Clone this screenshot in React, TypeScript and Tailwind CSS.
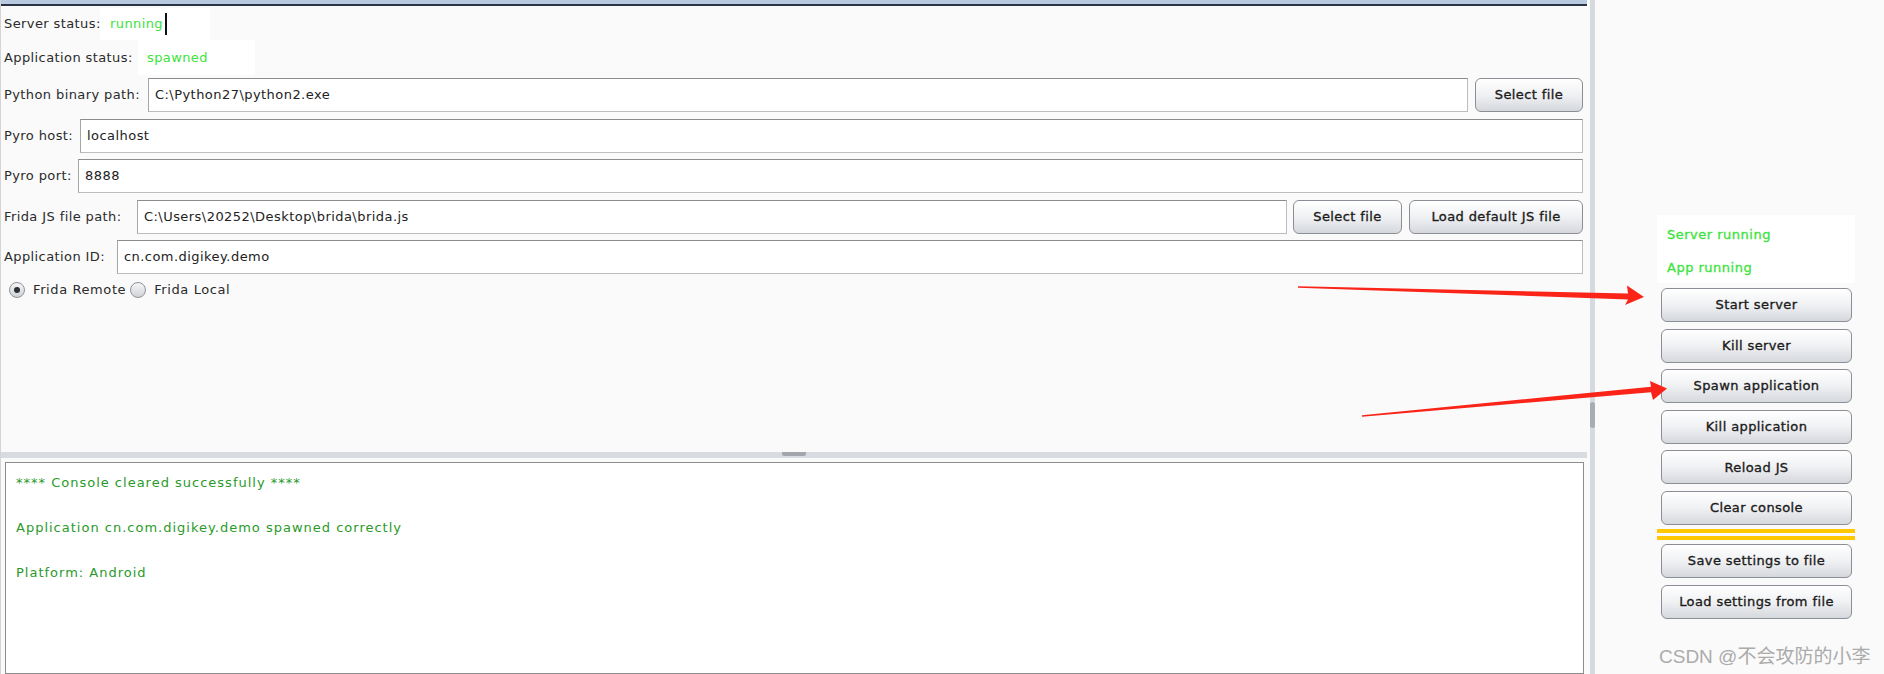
import type { ReactNode } from "react";

const FONT = "font-['DejaVu_Sans',sans-serif]";

function JButton({ children, className = "" }: { children: ReactNode; className?: string }) {
  return (
    <button
      type="button"
      className={`flex h-[34px] shrink-0 items-center justify-center whitespace-nowrap rounded-[6px] border border-[#8b8e94] bg-linear-to-b from-white via-[#f0f1f3] to-[#d5d8dd] text-[13px] tracking-[0.4px] text-[#1c1c1c] shadow-[inset_0_1px_0_#ffffff] [-webkit-text-stroke:0.35px_#1c1c1c] ${className}`}
    >
      {children}
    </button>
  );
}

function TextBox({ value, className = "" }: { value: string; className?: string }) {
  return (
    <div
      className={`flex h-[34px] min-w-0 flex-1 items-center whitespace-nowrap border border-[#bdbdbd] border-t-[#8c8c8c] border-l-[#a6a6a6] bg-white pl-[6px] text-[13px] tracking-[0.45px] text-[#222] ${className}`}
    >
      {value}
    </div>
  );
}

function Radio({ checked, label }: { checked?: boolean; label: string }) {
  return (
    <div className="flex items-center gap-[8px]">
      <span className="flex h-[16px] w-[16px] items-center justify-center rounded-full border border-[#8e9298] bg-linear-to-b from-[#f6f7f8] to-[#cfd2d7]">
        {checked && <span className="h-[6px] w-[6px] rounded-full bg-[#2d3035]" />}
      </span>
      <span className="whitespace-nowrap text-[13px] tracking-[0.6px] text-[#2b2b2b]">{label}</span>
    </div>
  );
}

export default function App() {
  const sideButtons = ["Start server", "Kill server", "Spawn application", "Kill application", "Reload JS", "Clear console"];

  return (
    <div className={`relative flex h-[674px] w-[1884px] overflow-hidden bg-[#fafafa] ${FONT}`}>
      {/* left: settings + console */}
      <div className="flex w-[1590px] shrink-0 flex-col border-l border-[#d4d4d4]">
        <div className="mr-[3px] h-[4px] bg-[#b7cadf]" />
        <div className="mr-[3px] h-[2px] bg-[#2c3343]" />

        <div className="flex h-[446px] flex-col whitespace-nowrap pl-[3px] pr-[7px] pt-[2px] text-[13px] tracking-[0.4px] text-[#2b2b2b]">
          <div className="flex h-[32px] items-center">
            <span className="w-[96px] shrink-0">Server status:</span>
            <div className="flex h-[32px] w-[110px] shrink-0 items-center bg-white pl-[10px] text-[#3be33b]">
              running
              <span className="ml-[2px] h-[22px] w-[2px] bg-[#111]" />
            </div>
          </div>
          <div className="flex h-[35px] items-center">
            <span className="w-[134px] shrink-0">Application status:</span>
            <div className="flex h-[35px] w-[117px] shrink-0 items-center bg-white pl-[9px] text-[#3be33b]">spawned</div>
          </div>

          <div className="mt-[3px] flex flex-col gap-[6.5px]">
            <div className="flex items-center">
              <span className="w-[144px] shrink-0">Python binary path:</span>
              <TextBox value="C:\Python27\python2.exe" />
              <JButton className="ml-[7px] w-[108px]">Select file</JButton>
            </div>
            <div className="flex items-center">
              <span className="w-[76px] shrink-0">Pyro host:</span>
              <TextBox value="localhost" />
            </div>
            <div className="flex items-center">
              <span className="w-[74px] shrink-0">Pyro port:</span>
              <TextBox value="8888" className="pl-[3px]" />
            </div>
            <div className="flex items-center">
              <span className="w-[133px] shrink-0">Frida JS file path:</span>
              <TextBox value="C:\Users\20252\Desktop\brida\brida.js" />
              <JButton className="ml-[6px] w-[109px]">Select file</JButton>
              <JButton className="ml-[7px] w-[174px]">Load default JS file</JButton>
            </div>
            <div className="flex items-center">
              <span className="w-[113px] shrink-0">Application ID:</span>
              <TextBox value="cn.com.digikey.demo" />
            </div>
          </div>

          <div className="ml-[5px] mt-[6px] flex items-center gap-[4px]">
            <Radio checked label="Frida Remote" />
            <Radio label="Frida Local" />
          </div>
        </div>

        {/* split pane divider */}
        <div className="mr-[3px] flex h-[6px] justify-center bg-[#d8dbe0]">
          <span className="h-[4px] w-[24px] rounded-b-[2px] bg-[#a3a7ad]" />
        </div>

        <div className="ml-[4px] mr-[6px] mt-[4px] flex-1 whitespace-nowrap border border-[#8d8d8d] bg-white pl-[10px] text-[13px] leading-[45px] tracking-[1px] text-[#2a9a2a]">
          <div className="mt-[-3px]">
            <div>**** Console cleared successfully ****</div>
            <div>Application cn.com.digikey.demo spawned correctly</div>
            <div>Platform: Android</div>
          </div>
        </div>
      </div>

      {/* scroll strip */}
      <div className="flex w-[5px] shrink-0 flex-col items-center bg-[#d6d9de] pt-[402px]">
        <span className="h-[26px] w-[5px] rounded-full bg-[#a9adb3]" />
      </div>

      {/* right: controls */}
      <div className="flex flex-1 flex-col pl-[62px] pt-[215px]">
        <div className="flex w-[198px] flex-col bg-white pl-[10px] pt-[3px] text-[13px] tracking-[0.5px] text-[#3be33b] [-webkit-text-stroke:0.3px_#3be33b]">
          <div className="flex h-[34px] items-center">Server running</div>
          <div className="flex h-[31px] items-center">App running</div>
        </div>

        <div className="mt-[5px] flex w-[198px] flex-col gap-[6.6px] pl-[4px] pr-[3px]">
          {sideButtons.map((b) => (
            <JButton key={b} className="w-full">
              {b}
            </JButton>
          ))}
        </div>

        <div className="mt-[4px] h-[4px] w-[198px] bg-[#ffc800]" />
        <div className="mt-[3px] h-[4px] w-[198px] bg-[#ffc800]" />

        <div className="mt-[4px] flex w-[198px] flex-col gap-[7px] pl-[4px] pr-[3px]">
          <JButton className="w-full">Save settings to file</JButton>
          <JButton className="w-full">Load settings from file</JButton>
        </div>

        <div className="ml-[2px] mt-[26px] whitespace-nowrap text-[19px] leading-[24px] text-[#ababab] font-['Liberation_Sans','Noto_Sans_CJK_SC',sans-serif]">
          CSDN @不会攻防的小李
        </div>
      </div>

      {/* annotation arrows */}
      <svg className="pointer-events-none absolute inset-0 h-full w-full" viewBox="0 0 1884 674">
        <polygon
          fill="#fb2418"
          points="1298,286.3 1628,293.5 1627,285.5 1644,297 1625,305 1628,299.5 1298,287.7"
        />
        <polygon
          fill="#fb2418"
          points="1362,415.3 1651,386.7 1650,381 1667,388.5 1653,400 1651,392.3 1362,416.7"
        />
      </svg>
    </div>
  );
}
